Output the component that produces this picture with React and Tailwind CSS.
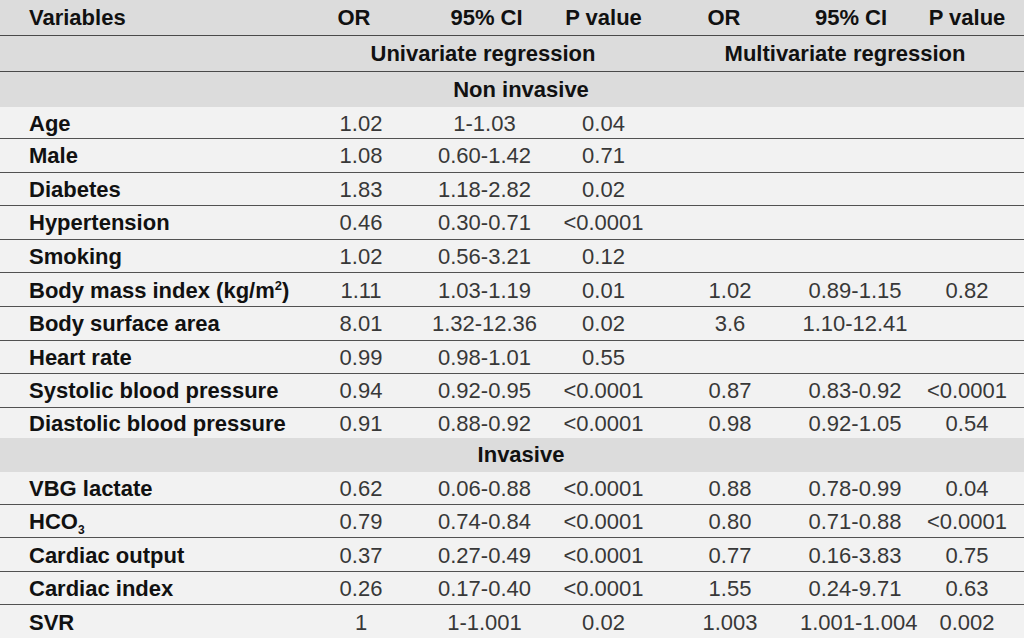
const cols = 'grid grid-cols-[300px_122px_125px_113px_140px_110px_114px] items-center';

const nonInvasive = [
  { name: 'Age', v: ['1.02', '1-1.03', '0.04'], h: 'h-[31px]' },
  { name: 'Male', v: ['1.08', '0.60-1.42', '0.71'] },
  { name: 'Diabetes', v: ['1.83', '1.18-2.82', '0.02'] },
  { name: 'Hypertension', v: ['0.46', '0.30-0.71', '<0.0001'] },
  { name: 'Smoking', v: ['1.02', '0.56-3.21', '0.12'] },
  {
    name: (
      <>
        Body mass index (kg/m<sup className="text-[13px] top-[-8px]">2</sup>)
      </>
    ),
    v: ['1.11', '1.03-1.19', '0.01', '1.02', '0.89-1.15', '0.82'],
  },
  { name: 'Body surface area', v: ['8.01', '1.32-12.36', '0.02', '3.6', '1.10-12.41', ''] },
  { name: 'Heart rate', v: ['0.99', '0.98-1.01', '0.55'] },
  { name: 'Systolic blood pressure', v: ['0.94', '0.92-0.95', '<0.0001', '0.87', '0.83-0.92', '<0.0001'] },
  { name: 'Diastolic blood pressure', v: ['0.91', '0.88-0.92', '<0.0001', '0.98', '0.92-1.05', '0.54'], h: 'h-[31px]' },
];

const invasive = [
  { name: 'VBG lactate', v: ['0.62', '0.06-0.88', '<0.0001', '0.88', '0.78-0.99', '0.04'], h: 'h-[32px]' },
  {
    name: (
      <>
        HCO<sub className="text-[12px] relative top-[5px]">3</sub>
      </>
    ),
    v: ['0.79', '0.74-0.84', '<0.0001', '0.80', '0.71-0.88', '<0.0001'],
  },
  { name: 'Cardiac output', v: ['0.37', '0.27-0.49', '<0.0001', '0.77', '0.16-3.83', '0.75'] },
  { name: 'Cardiac index', v: ['0.26', '0.17-0.40', '<0.0001', '1.55', '0.24-9.71', '0.63'] },
  { name: 'SVR', v: ['1', '1-1.001', '0.02', '1.003', '1.001-1.004', '0.002'] },
];

function Row({ row, first, mid }) {
  const cells = [0, 1, 2, 3, 4, 5].map((i) => row.v[i] || '');
  return (
    <div
      className={`${cols} box-border ${row.h || mid} ${first ? '' : 'border-t border-[#525252]'} bg-[#f2f2f2]`}
    >
      <div className="pl-[29px] font-bold text-[#111] whitespace-nowrap pt-[2px]">{row.name}</div>
      {cells.map((c, i) => (
        <div key={i} className="text-center text-[#383838] whitespace-nowrap pt-[2px]">
          {c}
        </div>
      ))}
    </div>
  );
}

function Section({ title }) {
  return (
    <div className="h-[34px] bg-[#dcdcdc] flex items-center justify-center pl-[18px] font-bold text-[#111]">
      {title}
    </div>
  );
}

export default function App() {
  return (
    <div className="w-[1024px] h-[638px] overflow-hidden bg-[#f2f2f2] text-[22px] leading-none font-['Liberation_Sans',Arial,sans-serif]">
      <div className={`${cols} h-[36px] box-border border-b border-[#4a4a4a] bg-[#dcdcdc] font-bold text-[#111]`}>
        <div className="pl-[29px]">Variables</div>
        <div className="text-center pr-[14px]">OR</div>
        <div className="text-center pl-[4px]">95% CI</div>
        <div className="text-center">P value</div>
        <div className="text-center pr-[12px]">OR</div>
        <div className="text-center pr-[8px]">95% CI</div>
        <div className="text-center">P value</div>
      </div>
      <div className={`${cols} h-[36px] box-border border-b border-[#4a4a4a] bg-[#dcdcdc] font-bold text-[#111]`}>
        <div />
        <div className="col-span-3 text-center pl-[6px]">Univariate regression</div>
        <div className="col-span-3 text-center pl-[6px]">Multivariate regression</div>
      </div>
      <div className="h-[35px] bg-[#dcdcdc] flex items-center justify-center pl-[18px] font-bold text-[#111]">
        Non invasive
      </div>
      {nonInvasive.map((r, i) => (
        <Row key={i} row={r} first={i === 0} mid="h-[33.6px]" />
      ))}
      <Section title="Invasive" />
      {invasive.map((r, i) => (
        <Row key={i} row={r} first={i === 0} mid="h-[33.5px]" />
      ))}
    </div>
  );
}
